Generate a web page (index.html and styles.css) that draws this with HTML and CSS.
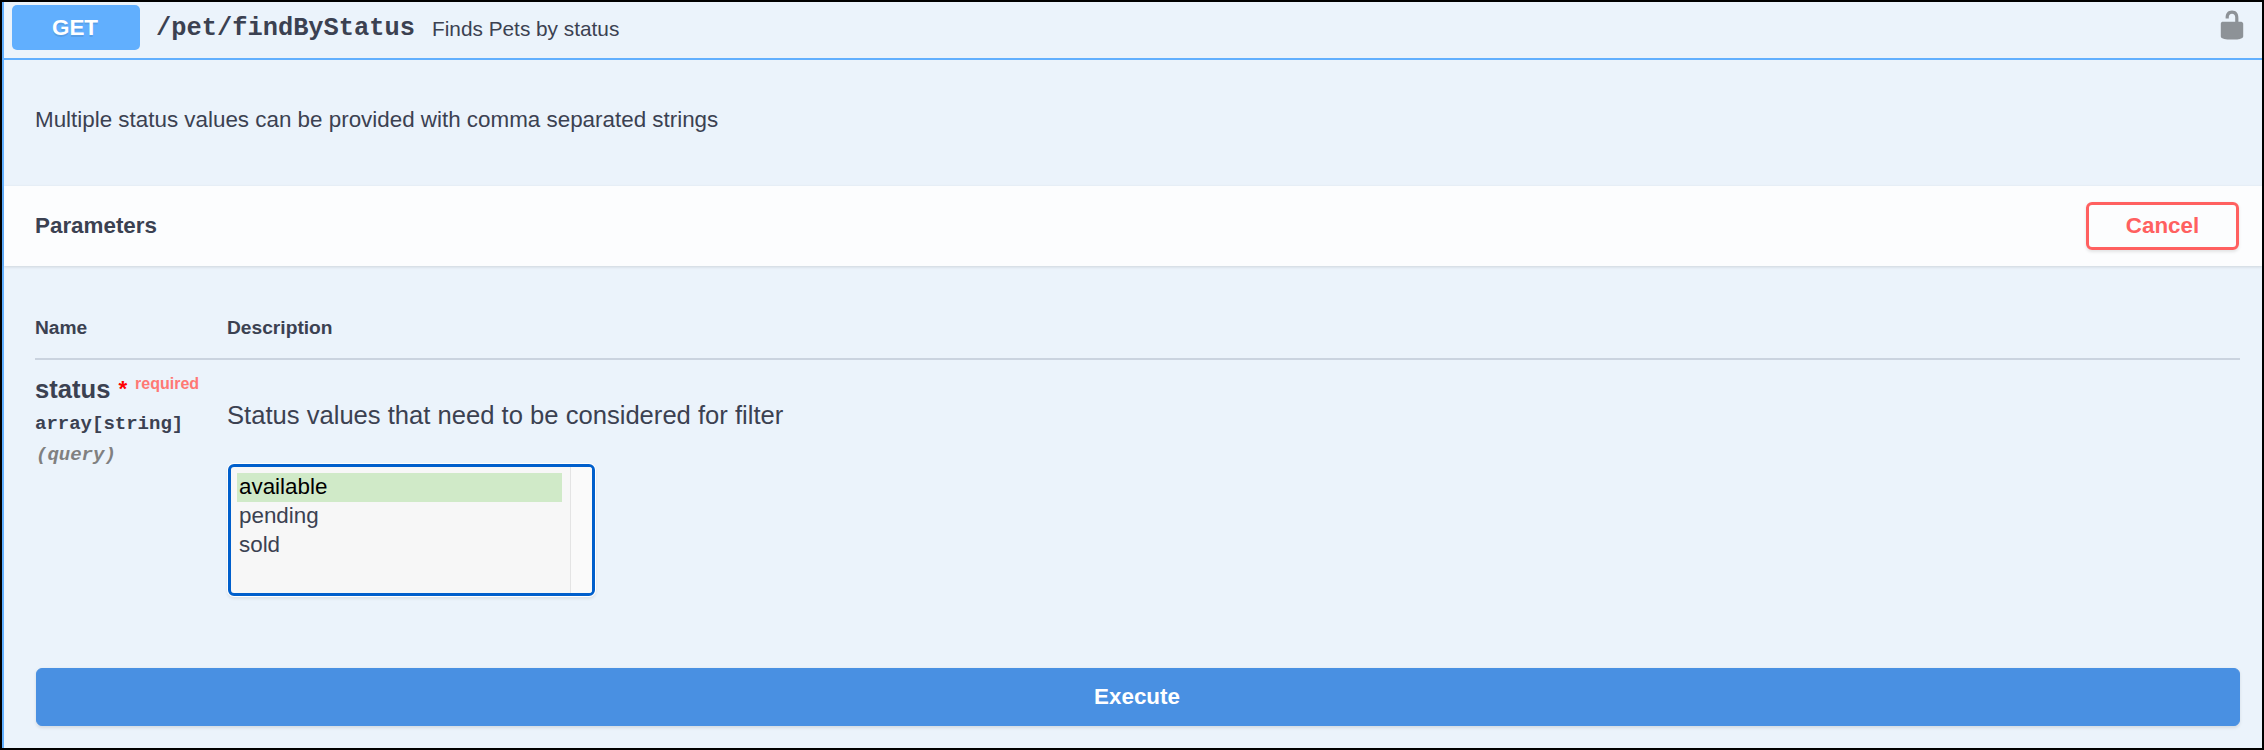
FILE: index.html
```html
<!DOCTYPE html>
<html lang="en">
<head>
<meta charset="utf-8">
<title>GET /pet/findByStatus</title>
<link rel="stylesheet" href="styles.css">
</head>
<body>
<main class="opblock">
  <header class="summary">
    <span class="method">GET</span>
    <span class="path">/pet/findByStatus</span>
    <span class="summary-text">Finds Pets by status</span>
    <svg class="lock" viewBox="0 0 20 20" aria-hidden="true"><path d="M15.8 8H14V5.6C14 2.703 12.665 1 10 1 7.334 1 6 2.703 6 5.6V6h2v-.801C8 3.754 8.797 3 10 3c1.203 0 2 .754 2 2.199V8H4c-.553 0-1 .646-1 1.199V17c0 .549.428 1.139.951 1.307l1.197.387C5.672 18.861 6.55 19 7.1 19h5.8c.549 0 1.428-.139 1.951-.307l1.196-.387c.524-.167.953-.757.953-1.306V9.199C17 8.646 16.352 8 15.8 8z"/></svg>
  </header>
  <p class="notes">Multiple status values can be provided with comma separated strings</p>
  <section class="section-header">
    <h4 class="section-title">Parameters</h4>
    <button class="cancel" type="button">Cancel</button>
  </section>
  <section class="parameters">
    <div class="row head">
      <div>Name</div>
      <div>Description</div>
    </div>
    <div class="row">
      <div class="param">
        <div class="param-name">status<span class="star">*</span><span class="required">required</span></div>
        <div class="param-type">array[string]</div>
        <div class="param-in">(query)</div>
      </div>
      <div class="param-desc">
        <p class="desc-text">Status values that need to be considered for filter</p>
        <div class="listbox" role="listbox">
          <div class="options">
            <div class="option selected" role="option">available</div>
            <div class="option" role="option">pending</div>
            <div class="option" role="option">sold</div>
          </div>
          <div class="track"></div>
        </div>
      </div>
    </div>
  </section>
  <button class="execute" type="button">Execute</button>
</main>
</body>
</html>
```
FILE: styles.css
```css
* {
  box-sizing: border-box;
}

body {
  margin: 0;
  background: #000;
  padding: 2px;
  color: #3b4151;
  font-family: "Liberation Sans", Arial, sans-serif;
  font-size: 22.4px;
}

p,
h4 {
  margin: 0;
}

button {
  font-family: inherit;
  font-size: 22.4px;
  font-weight: 700;
  padding: 0;
}

.opblock {
  height: 746px;
  background: #ebf3fb;
  border-left: 2px solid #61affe;
}

.summary {
  display: flex;
  align-items: flex-start;
  height: 58px;
  padding: 3px 14px 0 8px;
  border-bottom: 2px solid #61affe;
}

.method {
  width: 128px;
  height: 45px;
  padding-right: 2px;
  line-height: 45px;
  border-radius: 5px;
  background: #61affe;
  color: #fff;
  font-weight: 700;
  text-align: center;
  text-shadow: 0 1.6px 0 rgba(0, 0, 0, 0.1);
}

.path {
  margin-left: 16px;
  line-height: 48px;
  font-family: "Liberation Mono", "Courier New", monospace;
  font-size: 25.4px;
  font-weight: 700;
}

.summary-text {
  margin-left: 17px;
  line-height: 47px;
  font-size: 20.8px;
}

.lock {
  width: 32px;
  height: 32px;
  margin: 4px 0 0 auto;
  fill: #8d9297;
}

.notes {
  height: 126px;
  padding: 44px 31px 0;
  line-height: 32px;
}

.section-header {
  display: flex;
  align-items: center;
  justify-content: space-between;
  height: 80px;
  padding: 0 23px 0 31px;
  background: #fcfdfe;
  box-shadow: 0 1px 3px rgba(0, 0, 0, 0.13);
}

.section-title {
  font-size: 22.4px;
  line-height: 32px;
}

.cancel {
  width: 153px;
  height: 48px;
  border: 3px solid #ff6060;
  border-radius: 6px;
  background: transparent;
  color: #ff6060;
  box-shadow: 0 1.6px 3.2px rgba(0, 0, 0, 0.1);
}

.parameters {
  margin: 46px 22px 0 31px;
}

.row {
  display: grid;
  grid-template-columns: 192px 1fr;
}

.head {
  height: 48px;
  border-bottom: 2px solid #cad3df;
  font-size: 19.2px;
  font-weight: 700;
  line-height: 32px;
}

.param {
  padding-top: 13px;
}

.param-name {
  display: flex;
  height: 36px;
  font-size: 25.6px;
  font-weight: 700;
  line-height: 32px;
}

.star {
  margin-left: 8px;
  color: #f00;
  font-size: 22.4px;
  line-height: 32px;
}

.required {
  margin-left: 8px;
  color: #ff7874;
  font-size: 16px;
  line-height: 21px;
}

.param-type,
.param-in {
  font-family: "Liberation Mono", "Courier New", monospace;
  font-size: 19px;
  font-weight: 700;
  line-height: 31px;
}

.param-in {
  padding-left: 1px;
  color: #808080;
  font-style: italic;
}

.param-desc {
  padding-top: 38px;
}

.desc-text {
  font-size: 25.6px;
  line-height: 34px;
}

.listbox {
  display: flex;
  width: 367px;
  height: 132px;
  margin: 32px 0 0 1px;
  border: 3px solid #005fcc;
  border-radius: 6px;
  background: #f7f7f7;
  box-shadow: 0 0 0 1px #fff, 0 2px 3px 1px rgba(0, 0, 0, 0.07);
  overflow: hidden;
}

.options {
  flex: 1;
  padding: 6px 8px 0 6px;
}

.option {
  height: 28.8px;
  padding-left: 2px;
  line-height: 28px;
}

.selected {
  background: #d0eac8;
  color: #000;
}

.track {
  width: 22px;
  border-left: 1px solid #e4e4e4;
  background: #fafafa;
}

.execute {
  display: block;
  width: 2204px;
  height: 58px;
  margin: 72px 0 0 32px;
  padding-right: 2px;
  border: 1px solid #4990e2;
  border-radius: 6px;
  background: #4990e2;
  color: #fff;
  box-shadow: 0 1.6px 3.2px rgba(0, 0, 0, 0.1);
}
```
